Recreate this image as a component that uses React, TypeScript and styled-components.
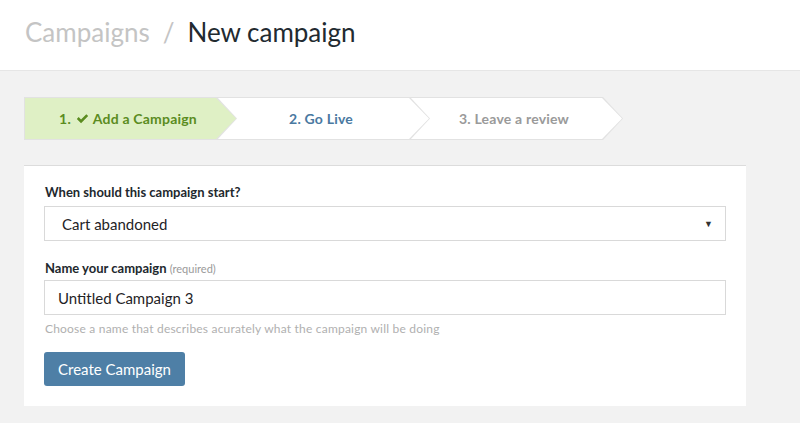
import React from "react";
import styled, { createGlobalStyle } from "styled-components";

const GlobalStyle = createGlobalStyle`
  html, body {
    margin: 0;
    padding: 0;
    background: #f2f2f2;
    font-family: "Lato", "Open Sans", sans-serif;
  }
`;

const Page = styled.div`
  min-height: 423px;
  background: #f2f2f2;
`;

const Header = styled.header`
  height: 71px;
  box-sizing: border-box;
  display: flex;
  align-items: center;
  padding: 0 25px 6px;
  background: #fff;
  border-bottom: 1px solid #e6e6e6;
`;

const Title = styled.h1`
  margin: 0;
  font-size: 26px;
  font-weight: 400;
  color: #222a30;
  display: flex;
  gap: 13px;
  align-items: baseline;
`;

const Crumb = styled.span<{ $muted?: boolean }>`
  color: ${(p) => (p.$muted ? "#c4c4c4" : "#222a30")};
`;

const Content = styled.main`
  padding: 26px 54px 0 24px;
`;

const Steps = styled.div`
  display: flex;
  height: 43px;
  margin-bottom: 25px;
`;

const chevron =
  "polygon(0 0, calc(100% - 20px) 0, 100% 50%, calc(100% - 20px) 100%, 0 100%)";

const Step = styled.div<{ $z: number }>`
  width: 211px;
  flex-shrink: 0;
  margin-right: -20px;
  padding: 1px;
  display: flex;
  position: relative;
  z-index: ${(p) => p.$z};
  background: #e2e2e2;
  clip-path: ${chevron};
`;

const StepFill = styled.div<{ $bg: string; $color: string }>`
  flex: 1;
  display: flex;
  align-items: center;
  justify-content: center;
  padding-right: 5px;
  background: ${(p) => p.$bg};
  color: ${(p) => p.$color};
  clip-path: ${chevron};
  font-size: 14px;
  font-weight: 700;
  letter-spacing: 0.2px;
`;

const Check = styled.svg`
  width: 13px;
  height: 13px;
  margin: 0 1px -1px 1px;
  fill: currentColor;
`;

const Card = styled.section`
  background: #fff;
  border-top: 1px solid #dcdcdc;
  padding: 18px 20px 20px 20px;
`;

const Label = styled.label<{ $gap: number }>`
  display: block;
  font-size: 13px;
  line-height: 16px;
  font-weight: 700;
  color: #22282d;
  margin: 0 0 ${(p) => p.$gap}px 1px;
`;

const Hint = styled.span`
  font-size: 11px;
  line-height: 1;
  font-weight: 400;
  color: #9a9a9a;
`;

const Field = styled.div<{ $pad: number; $gap: number }>`
  height: 33px;
  border: 1px solid #d9d9d9;
  display: flex;
  align-items: center;
  justify-content: space-between;
  padding: 0 12px 0 ${(p) => p.$pad}px;
  font-size: 15px;
  color: #1f2326;
  margin-bottom: ${(p) => p.$gap}px;
`;

const Caret = styled.span`
  font-size: 9px;
  color: #333;
`;

const Help = styled.p`
  margin: 0 0 16px 1px;
  font-size: 12px;
  line-height: 15px;
  color: #b0b0b0;
  letter-spacing: 0.2px;
`;

const Button = styled.button`
  height: 34px;
  padding: 0 14px;
  border: none;
  border-radius: 3px;
  background: #4e7fa6;
  color: #fff;
  font-family: inherit;
  font-size: 15px;
`;

const steps = [
  { num: "1.", label: "Add a Campaign", done: true, bg: "#dff0c5", color: "#5b8c1f" },
  { num: "2.", label: "Go Live", done: false, bg: "#fff", color: "#4a79a1" },
  { num: "3.", label: "Leave a review", done: false, bg: "#fff", color: "#9a9a9a" },
];

const App: React.FC = () => {
  return (
    <Page>
      <GlobalStyle />
      <Header>
        <Title>
          <Crumb $muted>Campaigns</Crumb>
          <Crumb $muted>/</Crumb>
          <Crumb>New campaign</Crumb>
        </Title>
      </Header>
      <Content>
        <Steps>
          {steps.map((s, i) => (
            <Step key={s.label} $z={steps.length - i}>
              <StepFill $bg={s.bg} $color={s.color}>
                <span>
                  {s.num}{" "}
                  {s.done && (
                    <>
                      <Check viewBox="0 0 16 16">
                        <path d="M1 8.6 3.3 6.3 6.2 9.2 12.7 2.7 15 5 6.2 13.8Z" />
                      </Check>{" "}
                    </>
                  )}
                  {s.label}
                </span>
              </StepFill>
            </Step>
          ))}
        </Steps>
        <Card>
          <Label $gap={6}>When should this campaign start?</Label>
          <Field $pad={17} $gap={19}>
            Cart abandoned
            <Caret>{"\u25BC"}</Caret>
          </Field>
          <Label $gap={4}>
            Name your campaign <Hint>(required)</Hint>
          </Label>
          <Field $pad={13} $gap={6}>
            Untitled Campaign 3
          </Field>
          <Help>
            Choose a name that describes acurately what the campaign will be
            doing
          </Help>
          <Button>Create Campaign</Button>
        </Card>
      </Content>
    </Page>
  );
};

export default App;
